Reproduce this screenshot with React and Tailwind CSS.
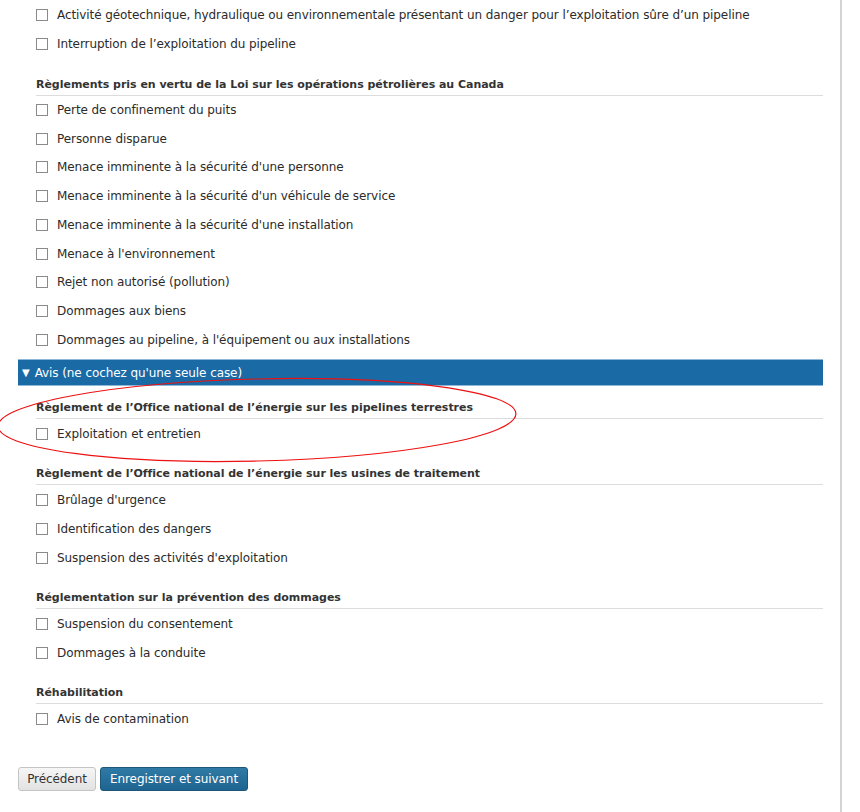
const sections = [
  {
    title: null,
    items: [
      'Activité géotechnique, hydraulique ou environnementale présentant un danger pour l’exploitation sûre d’un pipeline',
      'Interruption de l’exploitation du pipeline',
    ],
  },
  {
    title: 'Règlements pris en vertu de la Loi sur les opérations pétrolières au Canada',
    items: [
      'Perte de confinement du puits',
      'Personne disparue',
      "Menace imminente à la sécurité d'une personne",
      "Menace imminente à la sécurité d'un véhicule de service",
      "Menace imminente à la sécurité d'une installation",
      "Menace à l'environnement",
      'Rejet non autorisé (pollution)',
      'Dommages aux biens',
      "Dommages au pipeline, à l'équipement ou aux installations",
    ],
  },
]

const avis = [
  {
    title: 'Règlement de l’Office national de l’énergie sur les pipelines terrestres',
    items: ['Exploitation et entretien'],
  },
  {
    title: 'Règlement de l’Office national de l’énergie sur les usines de traitement',
    items: ["Brûlage d'urgence", 'Identification des dangers', "Suspension des activités d'exploitation"],
  },
  {
    title: 'Réglementation sur la prévention des dommages',
    items: ['Suspension du consentement', 'Dommages à la conduite'],
  },
  {
    title: 'Réhabilitation',
    items: ['Avis de contamination'],
  },
]

function CheckRow({ label, tall }) {
  return (
    <li className={`flex items-center gap-[9px] ${tall ? 'h-[29px]' : 'h-[28.75px]'}`}>
      <span className="box-border block size-[12px] shrink-0 border border-[#8a8a8a] bg-white" />
      <span>{label}</span>
    </li>
  )
}

function Section({ title, items, first, tall }) {
  return (
    <div className={first ? '' : 'mt-[18px]'}>
      {title ? (
        <h3 className="border-b border-[#dcdcdc] pb-[2px] text-[11px] font-bold leading-[16px] tracking-[-0.03px] text-[#333]">{title}</h3>
      ) : null}
      <ul className="pl-0">
        {items.map((item) => (
          <CheckRow key={item} label={item} tall={tall} />
        ))}
      </ul>
    </div>
  )
}

export default function App() {
  return (
    <div className="relative min-h-[812px] w-[860px] overflow-hidden bg-white font-['DejaVu_Sans',sans-serif] text-[12px] tracking-[-0.08px] text-[#2b2b2b]">
      <div className="w-[842px] border-r-2 border-[#d4d4d4] pt-[1px] pb-[21px]">
        <div className="ml-[18px] w-[805px]">
          <div className="pl-[18px]">
            {sections.map((s, i) => (
              <Section key={i} {...s} first={i === 0} />
            ))}
          </div>

          <div className="mt-[4.75px] flex h-[27px] items-center border-y border-[#8fb8d8] bg-[#1a6aa5] pl-[4px] text-[12px] text-white">
            <span className="mr-[5px] text-[10px]">▼</span>
            Avis (ne cochez qu'une seule case)
          </div>

          <div className="pl-[18px]">
            {avis.map((s, i) => (
              <div key={i} className={i === 0 ? '-mt-[4px]' : ''}>
                <Section {...s} tall />
              </div>
            ))}
          </div>

          <div className="mt-[33.5px] flex gap-[4px]">
            <button className="h-[24px] w-[78px] rounded-[3px] border border-[#c4c4c4] bg-gradient-to-b from-[#f6f6f6] to-[#e2e2e2] text-[12px] text-[#333]">
              Précédent
            </button>
            <button className="h-[24px] w-[148px] rounded-[3px] border border-[#1d5676] bg-gradient-to-b from-[#2f7aa6] to-[#1f6490] text-[12px] text-white">
              Enregistrer et suivant
            </button>
          </div>
        </div>
      </div>

      <svg className="pointer-events-none absolute left-0 top-0" width="860" height="812">
        <ellipse cx="257" cy="420" rx="259" ry="41" fill="none" stroke="#ee1111" strokeWidth="1.2" transform="rotate(-1.4 257 420)" />
      </svg>
    </div>
  )
}
